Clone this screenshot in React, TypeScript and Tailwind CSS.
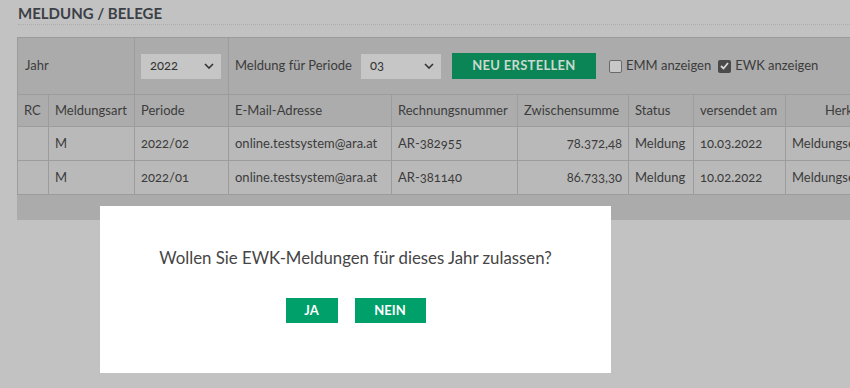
import React from "react";

const Chevron = () => (
  <svg width="10" height="6" viewBox="0 0 10 6" className="shrink-0">
    <path d="M1 1l4 4 4-4" fill="none" stroke="#333" strokeWidth="1.6" />
  </svg>
);

const Select = ({ value, w }: { value: string; w: string }) => (
  <div className={`flex h-[25px] ${w} items-center justify-between bg-[#c6c6c6] pl-[9px] pr-[7px] text-[13px] text-[#333]`}>
    <span>{value}</span>
    <Chevron />
  </div>
);

const Check = ({ checked }: { checked: boolean }) =>
  checked ? (
    <span className="flex h-[13px] w-[13px] items-center justify-center rounded-[2px] bg-[#4a4a4a]">
      <svg width="9" height="8" viewBox="0 0 9 8">
        <path d="M1 4l2.5 2.5L8 1" fill="none" stroke="#d8d8d8" strokeWidth="1.8" />
      </svg>
    </span>
  ) : (
    <span className="h-[13px] w-[13px] rounded-[2px] border border-[#6a6a6a] bg-[#c8c8c8]" />
  );

const rows = [
  { art: "M", per: "2022/02", mail: "online.testsystem@ara.at", nr: "AR-382955", sum: "78.372,48", st: "Meldung", ver: "10.03.2022", her: "Meldungserfassung" },
  { art: "M", per: "2022/01", mail: "online.testsystem@ara.at", nr: "AR-381140", sum: "86.733,30", st: "Meldung", ver: "10.02.2022", her: "Meldungserfassung" },
];

const cols = [31, 86, 94, 163, 126, 111, 65, 92, 120];

export default function App() {
  const td = "border border-[#9c9c9c] px-[6px] whitespace-nowrap overflow-hidden";
  return (
    <div
      className="relative h-[388px] w-[850px] overflow-hidden bg-[#c2c2c2] text-[#3c3c3c] [font-variant-numeric:oldstyle-nums]"
      style={{ fontFamily: "Lato, 'Open Sans', sans-serif" }}
    >
      <div className="pl-[18px] pt-[3px]">
        <h1 className="text-[15px] font-bold leading-[20px] text-[#3b4046]">MELDUNG / BELEGE</h1>
        <div className="mt-[1px] border-b border-dotted border-[#adadad]" />
      </div>

      <div className="ml-[17px] mt-[12px] w-[900px] bg-[#ababab] pb-[25px]">
        <table className="w-[888px] table-fixed border-collapse text-[13px]">
          <colgroup>
            {cols.map((c, i) => (
              <col key={i} style={{ width: c }} />
            ))}
          </colgroup>
          <tbody>
            <tr className="h-[57px]">
              <td colSpan={2} className={`${td} border-r-[#9c9c9c] pl-[7px]`}>Jahr</td>
              <td className={`${td} pl-[6px]`}>
                <Select value="2022" w="w-[80px]" />
              </td>
              <td colSpan={6} className={`${td} border-r-0`}>
                <div className="flex items-center">
                  <span className="mr-[9px]">Meldung für Periode</span>
                  <Select value="03" w="w-[80px]" />
                  <button className="ml-[11px] flex h-[26px] w-[144px] items-center justify-center bg-[#0b8555] text-[13px] font-bold tracking-[0.3px] text-[#c9d9cf]">
                    NEU ERSTELLEN
                  </button>
                  <label className="ml-[13px] flex items-center gap-[4px]">
                    <Check checked={false} />
                    <span>EMM anzeigen</span>
                  </label>
                  <label className="ml-[7px] flex items-center gap-[4px]">
                    <Check checked={true} />
                    <span>EWK anzeigen</span>
                  </label>
                </div>
              </td>
            </tr>
            <tr className="h-[32px] bg-[#acacac]">
              <td className={td}>RC</td>
              <td className={td}>Meldungsart</td>
              <td className={td}>Periode</td>
              <td className={td}>E-Mail-Adresse</td>
              <td className={td}>Rechnungsnummer</td>
              <td className={td}>Zwischensumme</td>
              <td className={td}>Status</td>
              <td className={td}>versendet am</td>
              <td className={`${td} pl-[39px]`}>Herkunft</td>
            </tr>
            {rows.map((r, i) => (
              <tr key={i} className="h-[34px] bg-[#b9b9b9]">
                <td className={td}></td>
                <td className={td}>{r.art}</td>
                <td className={td}>{r.per}</td>
                <td className={td}>{r.mail}</td>
                <td className={td}>{r.nr}</td>
                <td className={`${td} text-right`}>{r.sum}</td>
                <td className={td}>{r.st}</td>
                <td className={td}>{r.ver}</td>
                <td className={td}>{r.her}</td>
              </tr>
            ))}
          </tbody>
        </table>
      </div>

      <div className="absolute left-[100px] top-[206px] flex h-[167px] w-[511px] flex-col items-center bg-white">
        <p className="mt-[41px] text-[16.8px] leading-[22px] text-[#454545]">
          Wollen Sie EWK-Meldungen für dieses Jahr zulassen?
        </p>
        <div className="mt-[29px] flex gap-[17px]">
          <button className="flex h-[25px] w-[52px] items-center justify-center bg-[#00a06b] text-[13px] font-bold text-white">
            JA
          </button>
          <button className="flex h-[25px] w-[71px] items-center justify-center bg-[#00a06b] text-[13px] font-bold text-white">
            NEIN
          </button>
        </div>
      </div>
    </div>
  );
}
